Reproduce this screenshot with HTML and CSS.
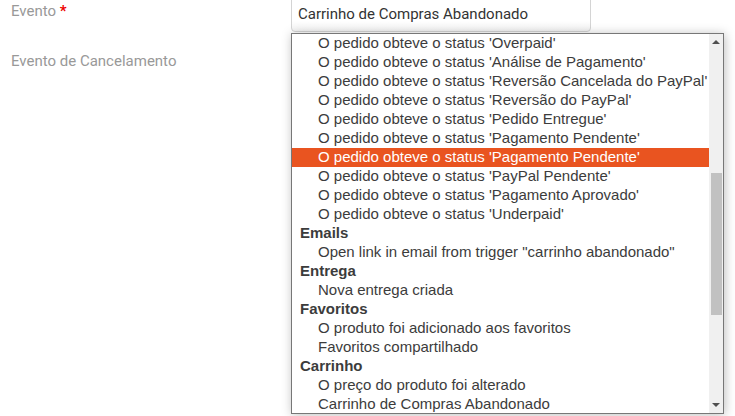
FILE: index.html
```html
<!DOCTYPE html>
<html lang="pt">
<head>
<meta charset="utf-8">
<link rel="stylesheet" href="styles.css">
</head>
<body>
<div class="form">
  <div class="row">
    <div class="label">Evento <span class="req">*</span></div>
    <div class="field">
      <div class="select">Carrinho de Compras Abandonado</div>
    </div>
  </div>
  <div class="row">
    <div class="label">Evento de Cancelamento</div>
    <div class="field"></div>
  </div>

  <div class="dropdown">
    <div class="list">
      <div class="opt">O pedido obteve o status 'Overpaid'</div>
      <div class="opt">O pedido obteve o status 'Análise de Pagamento'</div>
      <div class="opt">O pedido obteve o status 'Reversão Cancelada do PayPal'</div>
      <div class="opt">O pedido obteve o status 'Reversão do PayPal'</div>
      <div class="opt">O pedido obteve o status 'Pedido Entregue'</div>
      <div class="opt">O pedido obteve o status 'Pagamento Pendente'</div>
      <div class="opt selected">O pedido obteve o status 'Pagamento Pendente'</div>
      <div class="opt">O pedido obteve o status 'PayPal Pendente'</div>
      <div class="opt">O pedido obteve o status 'Pagamento Aprovado'</div>
      <div class="opt">O pedido obteve o status 'Underpaid'</div>
      <div class="group">Emails</div>
      <div class="opt">Open link in email from trigger "carrinho abandonado"</div>
      <div class="group">Entrega</div>
      <div class="opt">Nova entrega criada</div>
      <div class="group">Favoritos</div>
      <div class="opt">O produto foi adicionado aos favoritos</div>
      <div class="opt">Favoritos compartilhado</div>
      <div class="group">Carrinho</div>
      <div class="opt">O preço do produto foi alterado</div>
      <div class="opt">Carrinho de Compras Abandonado</div>
    </div>
    <div class="scrollbar">
      <div class="arrow up"></div>
      <div class="track"><div class="thumb"></div></div>
      <div class="arrow down"></div>
    </div>
  </div>
</div>
</body>
</html>
```
FILE: styles.css
```css
html, body {
  margin: 0;
  padding: 0;
  background: #fff;
  overflow: hidden;
}
body {
  width: 735px;
  height: 416px;
  font-family: Roboto, "Liberation Sans", sans-serif;
}
.form {
  position: relative;
  margin-top: -5px;
  padding-left: 11px;
}
.row {
  display: grid;
  grid-template-columns: 280px 300px;
  height: 50px;
}
.label {
  font-size: 15px;
  color: #999;
  line-height: 22px;
  padding-top: 5px;
}
.req {
  color: #e00;
  font-weight: bold;
}
.select {
  box-sizing: border-box;
  height: 37px;
  border: 1px solid #d4d4d4;
  border-radius: 4px;
  padding: 0 6px;
  font-size: 15px;
  line-height: 37px;
  color: #333;
  background: linear-gradient(#fff 70%, #f4f4f4);
}
.dropdown {
  position: absolute;
  left: 291px;
  top: 38px;
  width: 433px;
  height: 381px;
  box-sizing: border-box;
  border: 1px solid #777;
  background: #fff;
  display: flex;
  box-shadow: 1px 1px 10px rgba(0, 0, 0, 0.26);
  overflow: hidden;
}
.list {
  flex: 1;
  font-family: "Liberation Sans", Arial, sans-serif;
  font-size: 15px;
  color: #3c3c3c;
}
.opt, .group {
  height: 19px;
  line-height: 18px;
  padding-bottom: 1px;
  box-sizing: border-box;
  white-space: nowrap;
}
.opt {
  padding-left: 26px;
}
.group {
  padding-left: 8px;
  font-weight: bold;
}
.selected {
  background: #e95420;
  color: #fff;
}
.scrollbar {
  width: 14px;
  background: #f0f0f0;
  display: flex;
  flex-direction: column;
}
.arrow {
  height: 15px;
  position: relative;
}
.arrow::after {
  content: "";
  position: absolute;
  left: 3px;
  width: 0;
  height: 0;
  border-left: 4px solid transparent;
  border-right: 4px solid transparent;
}
.up::after {
  top: 6px;
  border-bottom: 4px solid #505050;
}
.down::after {
  top: 5px;
  border-top: 4px solid #505050;
}
.track {
  flex: 1;
  position: relative;
}
.thumb {
  position: absolute;
  left: 2px;
  right: 1px;
  top: 124px;
  height: 142px;
  background: #c1c1c1;
}
```
